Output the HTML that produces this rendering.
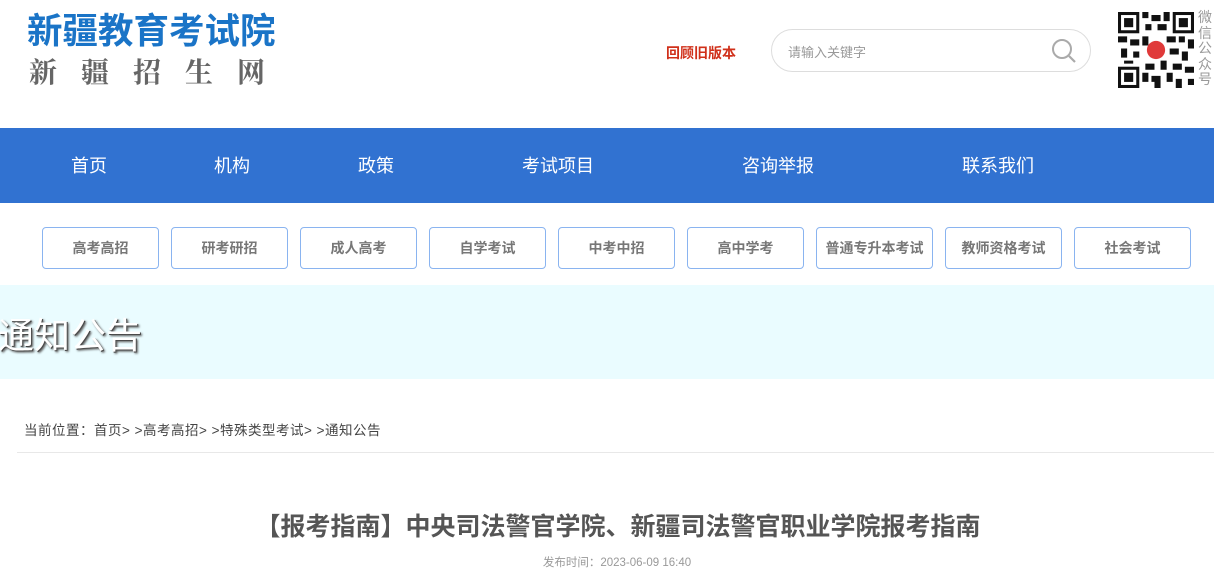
<!DOCTYPE html><html><head><meta charset="utf-8"><style>
*{margin:0;padding:0;box-sizing:border-box}
body{width:1214px;height:566px;overflow:hidden;background:#fff;font-family:"Liberation Sans","Noto Sans CJK SC",sans-serif;position:relative}
.a{position:absolute;white-space:nowrap}
.nav{position:absolute;left:0;top:128px;width:1214px;height:75px;background:#3172d1}
.nav span{position:absolute;top:26px;color:#fff;font-size:18px;line-height:24px}
.btn{position:absolute;top:227px;width:117px;height:42px;border:1px solid #8ab4f0;border-radius:4px;color:#777;font-weight:bold;font-size:14px;text-align:center;line-height:40px}
</style></head><body>
<div class="a" style="left:27px;top:9px;font-size:35.5px;font-weight:bold;color:#1a74c7;letter-spacing:0;line-height:44px">新疆教育考试院</div>
<div class="a" style="left:29px;top:53px;font-size:28px;color:#666;font-family:'Noto Serif CJK SC',serif;font-weight:bold;letter-spacing:24px;line-height:36px">新疆招生网</div>
<div class="a" style="left:666px;top:43px;font-size:14px;color:#d0301a;font-weight:bold">回顾旧版本</div>
<div class="a" style="left:771px;top:29px;width:320px;height:43px;border:1px solid #ddd;border-radius:22px"></div>
<div class="a" style="left:788px;top:42px;font-size:13px;color:#999">请输入关键字</div>
<svg class="a" style="left:1050px;top:37px" width="28" height="28"><circle cx="12" cy="12" r="9" fill="none" stroke="#aaa" stroke-width="2"/><path d="M19 19l6 6" stroke="#aaa" stroke-width="2.2"/></svg>
<svg class="a" style="left:1118px;top:12px" width="76" height="76" viewBox="0 0 25 25">
<rect width="25" height="25" fill="#fff"/>
<g fill="#111"><rect x="0" y="0" width="7" height="7"/><rect x="18" y="0" width="7" height="7"/><rect x="0" y="18" width="7" height="7"/></g>
<g fill="#fff"><rect x="1" y="1" width="5" height="5"/><rect x="19" y="1" width="5" height="5"/><rect x="1" y="19" width="5" height="5"/></g>
<g fill="#111"><rect x="2" y="2" width="3" height="3"/><rect x="20" y="2" width="3" height="3"/><rect x="2" y="20" width="3" height="3"/>
<path d="M8 0h2v2H8zM11 1h3v2h-3zM15 0h2v3h-2zM9 4h2v2H9zM13 4h3v2h-3zM0 8h3v2H0zM4 9h3v2H4zM8 8h2v3H8zM16 8h3v2h-3zM20 8h2v2h-2zM23 9h2v3h-2zM1 12h2v3H1zM5 13h2v2H5zM17 12h3v2h-3zM21 13h2v3h-2zM2 16h3v1H2zM9 17h3v2H9zM14 16h2v3h-2zM18 17h3v2h-3zM22 18h3v2h-3zM8 20h2v3H8zM11 21h3v2h-3zM16 20h2v3h-2zM19 22h2v3h-2zM23 22h2v2h-2zM12 23h2v2h-2z"/></g>
<circle cx="12.5" cy="12.5" r="3" fill="#e03a3a"/></svg>
<div class="a" style="left:1198px;top:10px;width:16px;font-size:14px;line-height:15.5px;color:#999;white-space:normal">微信公众号</div>
<div class="nav"><span style="left:71px">首页</span><span style="left:214px">机构</span><span style="left:358px">政策</span><span style="left:522px">考试项目</span><span style="left:742px">咨询举报</span><span style="left:962px">联系我们</span></div>
<div class="btn" style="left:42px">高考高招</div><div class="btn" style="left:171px">研考研招</div><div class="btn" style="left:300px">成人高考</div><div class="btn" style="left:429px">自学考试</div><div class="btn" style="left:558px">中考中招</div><div class="btn" style="left:687px">高中学考</div><div class="btn" style="left:816px">普通专升本考试</div><div class="btn" style="left:945px">教师资格考试</div><div class="btn" style="left:1074px">社会考试</div>
<div class="a" style="left:0;top:285px;width:1214px;height:94px;background:#eafcff"></div>
<div class="a" style="left:-2px;top:314px;font-size:36px;color:#fff;line-height:44px;text-shadow:2px 2px 2px #555,1px 1px 0 #333">通知公告</div>
<div class="a" style="left:24px;top:419px;font-size:13.5px;color:#444;letter-spacing:0.5px">当前位置：首页&gt; &gt;高考高招&gt; &gt;特殊类型考试&gt; &gt;通知公告</div>
<div class="a" style="left:17px;top:452px;width:1197px;height:1px;background:#e8e8e8"></div>
<div class="a" style="left:0;top:511px;width:1236px;text-align:center;font-size:25px;font-weight:bold;color:#555;line-height:32px">【报考指南】中央司法警官学院、新疆司法警官职业学院报考指南</div>
<div class="a" style="left:0;top:554px;width:1234px;text-align:center;font-size:11.5px;color:#999">发布时间：2023-06-09 16:40</div>
</body></html>
